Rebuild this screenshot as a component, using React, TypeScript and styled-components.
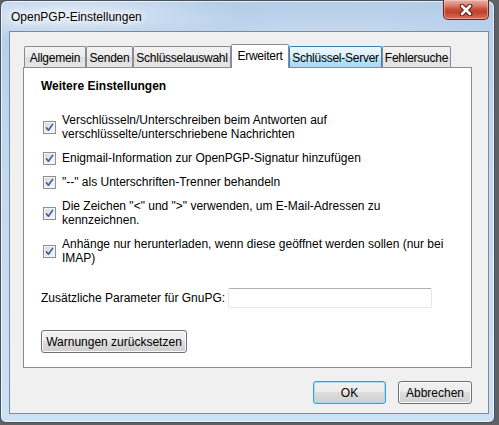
import React from "react";
import styled, { createGlobalStyle, css } from "styled-components";

const GlobalStyle = createGlobalStyle`
  html, body { margin: 0; padding: 0; }
  body {
    background: #5e6266;
    width: 499px;
    height: 425px;
    overflow: hidden;
    font-family: "Liberation Sans", Arial, sans-serif;
    font-size: 12px;
    color: #000;
  }
  * { box-sizing: border-box; }
`;

const Window = styled.div`
  width: 495px;
  height: 423px;
  border: 1px solid #46525e;
  border-radius: 7px 7px 6px 6px;
  background:
    radial-gradient(ellipse 170px 26px at 70px 14px, rgba(255, 255, 255, 0.6), rgba(255, 255, 255, 0) 100%),
    radial-gradient(ellipse 200px 40px at 330px 40px, rgba(255, 255, 255, 0.25), rgba(255, 255, 255, 0) 100%),
    linear-gradient(180deg, #b4cde9 0%, #c1d8f1 35%, #cde1f6 100%);
  box-shadow: inset 0 0 0 1px rgba(255, 255, 255, 0.65);
  display: flex;
  flex-direction: column;
`;

const TitleBar = styled.div`
  height: 30px;
  display: flex;
  justify-content: space-between;
  align-items: flex-start;
`;

const Title = styled.div`
  padding: 9px 0 0 10px;
  line-height: 14px;
  font-size: 12px;
  color: #000;
  text-shadow: 0 0 6px #fff, 0 0 10px #fff, 0 0 12px #fff;
`;

const CloseButton = styled.div`
  width: 46px;
  height: 20px;
  margin: -1px 5px 0 0;
  border: 1px solid #6b2118;
  border-top: none;
  border-radius: 0 0 5px 5px;
  background: linear-gradient(
    180deg,
    #eab2a6 0%,
    #db7d6b 30%,
    #c74a33 50%,
    #c2432c 65%,
    #d9715a 100%
  );
  box-shadow: inset 0 0 0 1px rgba(255, 220, 210, 0.45);
  display: flex;
  align-items: center;
  justify-content: center;
`;

const Client = styled.div`
  flex: 1;
  margin: 0 5px 8px 8px;
  border: 1px solid #7d8a99;
  background: #f0f0f0;
  padding: 12px 16px 9px 13px;
  display: flex;
  flex-direction: column;
`;

const TabStrip = styled.div`
  height: 23px;
  padding-left: 1px;
  display: flex;
  align-items: flex-end;
  position: relative;
  z-index: 1;
`;

type TabState = "normal" | "hover" | "active";

const Tab = styled.div<{ $width: number; $state: TabState }>`
  width: ${(p) => p.$width}px;
  height: 21px;
  border: 1px solid #898c95;
  border-bottom: none;
  border-radius: 2px 2px 0 0;
  display: flex;
  align-items: center;
  justify-content: center;
  white-space: nowrap;
  line-height: 14px;
  letter-spacing: -0.25px;
  padding-top: 1px;
  background: linear-gradient(180deg, #f3f3f3 0%, #ebebeb 50%, #dddddd 51%, #e6e6e6 100%);
  ${(p) =>
    p.$state === "hover" &&
    css`
      border-color: #3c7fb1;
      background: linear-gradient(180deg, #eaf6fd 0%, #d9f0fc 50%, #bee6fd 51%, #a7d9f5 100%);
    `}
  ${(p) =>
    p.$state === "active" &&
    css`
      height: 24px;
      margin-bottom: -1px;
      background: #fff;
      padding-top: 0;
      padding-bottom: 2px;
    `}
`;

const Panel = styled.div`
  flex: 1;
  background: #fff;
  border: 1px solid #898c95;
  padding: 11px 17px 0 17px;
  display: flex;
  flex-direction: column;
  align-items: flex-start;
`;

const SectionTitle = styled.div`
  font-weight: 700;
  line-height: 14px;
  margin-bottom: 20px;
`;

const OptionList = styled.div`
  display: flex;
  flex-direction: column;
  gap: 10px;
`;

const Option = styled.label`
  display: flex;
  align-items: center;
  gap: 6px;
  padding-left: 2px;
`;

const OptionText = styled.span`
  line-height: 14px;
  white-space: nowrap;
`;

const CheckBox = styled.span`
  width: 13px;
  height: 13px;
  flex: none;
  border: 1px solid #8e8f8f;
  background: linear-gradient(135deg, #d3d8e0 0%, #e9ecf1 60%, #f8f9fa 100%);
  box-shadow: inset 0 0 0 1px #f4f4f4;
  display: flex;
  align-items: center;
  justify-content: center;
`;

const FieldRow = styled.div`
  margin-top: 23px;
  display: flex;
  align-items: center;
`;

const FieldLabel = styled.span`
  width: 187px;
  line-height: 14px;
  white-space: nowrap;
`;

const TextInput = styled.input`
  width: 204px;
  height: 20px;
  border: 1px solid #e3e9ef;
  border-top-color: #abadb3;
  border-radius: 2px;
  background: #fff;
  padding: 0 3px;
  font: inherit;
  outline: none;
`;

const Button = styled.button<{ $width: number; $default?: boolean }>`
  width: ${(p) => p.$width}px;
  height: 23px;
  padding: 0;
  font-family: inherit;
  font-size: 12px;
  color: #000;
  border: 1px solid #707070;
  border-radius: 3px;
  background: linear-gradient(180deg, #f2f2f2 0%, #ebebeb 49%, #dddddd 50%, #cfcfcf 100%);
  box-shadow: inset 0 0 0 1px #fbfbfb;
  line-height: 14px;
  ${(p) =>
    p.$default &&
    css`
      border-color: #3c9bd3;
      box-shadow: inset 0 0 0 1px #a8dcf6;
    `}
`;

const WarnButton = styled(Button)`
  margin-top: 22px;
`;

const ButtonRow = styled.div`
  margin-top: 13px;
  display: flex;
  justify-content: flex-end;
  gap: 12px;
`;

const CheckMark = () => (
  <svg width="9" height="9" viewBox="0 0 9 9">
    <path d="M1.4 4.8 L3.4 7.2 L7.6 1.4" fill="none" stroke="#3f5a94" strokeWidth="1.6" strokeLinecap="round" strokeLinejoin="round" />
  </svg>
);

const CloseGlyph = () => (
  <svg width="14" height="12" viewBox="0 0 14 12">
    <path d="M3 2 L11 10 M11 2 L3 10" stroke="#5a1c12" strokeWidth="4.6" strokeLinecap="round" />
    <path d="M3 2 L11 10 M11 2 L3 10" stroke="#ffffff" strokeWidth="2.6" strokeLinecap="round" />
  </svg>
);

const tabs: { label: string; width: number; state: TabState }[] = [
  { label: "Allgemein", width: 62, state: "normal" },
  { label: "Senden", width: 47, state: "normal" },
  { label: "Schlüsselauswahl", width: 98, state: "normal" },
  { label: "Erweitert", width: 58, state: "active" },
  { label: "Schlüssel-Server", width: 93, state: "hover" },
  { label: "Fehlersuche", width: 69, state: "normal" },
];

const options: string[][] = [
  ["Verschlüsseln/Unterschreiben beim Antworten auf", "verschlüsselte/unterschriebene Nachrichten"],
  ["Enigmail-Information zur OpenPGP-Signatur hinzufügen"],
  ['"--" als Unterschriften-Trenner behandeln'],
  ['Die Zeichen "<" und ">" verwenden, um E-Mail-Adressen zu', "kennzeichnen."],
  ["Anhänge nur herunterladen, wenn diese geöffnet werden sollen (nur bei", "IMAP)"],
];

export default function App() {
  return (
    <>
      <GlobalStyle />
      <Window>
        <TitleBar>
          <Title>OpenPGP-Einstellungen</Title>
          <CloseButton>
            <CloseGlyph />
          </CloseButton>
        </TitleBar>
        <Client>
          <TabStrip>
            {tabs.map((t) => (
              <Tab key={t.label} $width={t.width} $state={t.state}>
                {t.label}
              </Tab>
            ))}
          </TabStrip>
          <Panel>
            <SectionTitle>Weitere Einstellungen</SectionTitle>
            <OptionList>
              {options.map((lines, i) => (
                <Option key={i}>
                  <CheckBox>
                    <CheckMark />
                  </CheckBox>
                  <OptionText>
                    {lines.map((l, j) => (
                      <React.Fragment key={j}>
                        {j > 0 && <br />}
                        {l}
                      </React.Fragment>
                    ))}
                  </OptionText>
                </Option>
              ))}
            </OptionList>
            <FieldRow>
              <FieldLabel>Zusätzliche Parameter für GnuPG:</FieldLabel>
              <TextInput type="text" />
            </FieldRow>
            <WarnButton $width={146}>Warnungen zurücksetzen</WarnButton>
          </Panel>
          <ButtonRow>
            <Button $width={73} $default>
              OK
            </Button>
            <Button $width={74}>Abbrechen</Button>
          </ButtonRow>
        </Client>
      </Window>
    </>
  );
}
